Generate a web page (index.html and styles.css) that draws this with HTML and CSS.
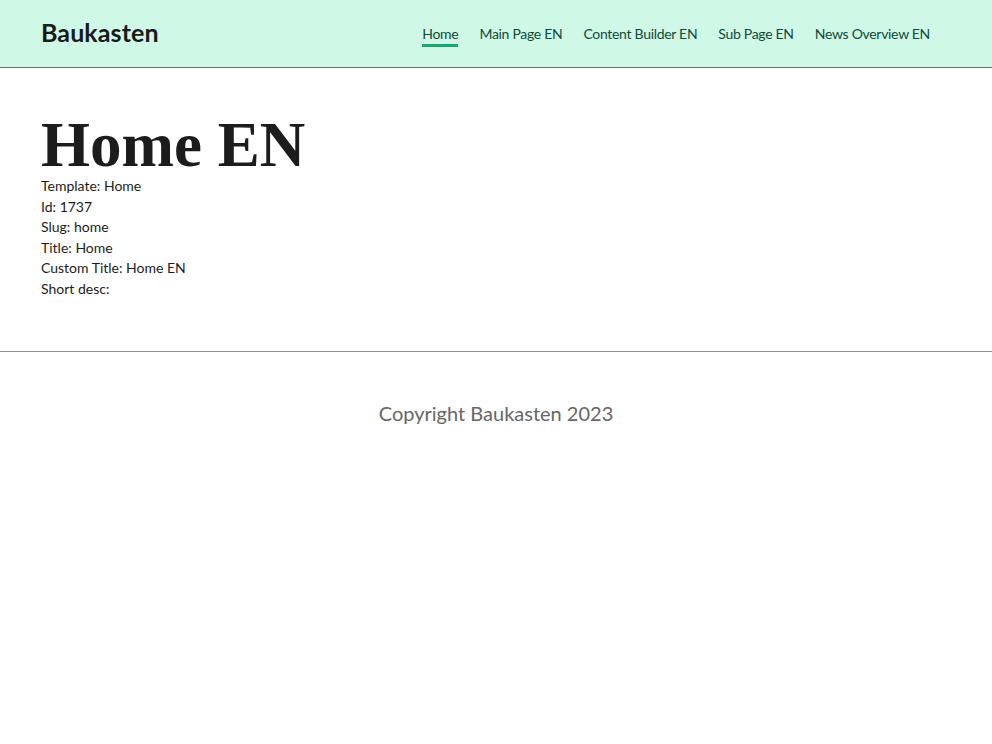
FILE: index.html
```html
<!DOCTYPE html>
<html>

<head>
	<title>Home EN | Baukasten</title>
	<link rel="stylesheet" href="styles.css">
</head>

<body>

	<header class="site_header">
		<div class="wrap header_row">
			<a class="logo" href="#">Baukasten</a>
			<nav class="main_nav">
				<a href="#" class="active">Home</a>
				<a href="#">Main Page EN</a>
				<a href="#">Content Builder EN</a>
				<a href="#">Sub Page EN</a>
				<a href="#">News Overview EN</a>
			</nav>
		</div>
	</header>

	<main class="wrap page_main">
		<h1 class="page_title">Home EN</h1>
		<div class="meta">
			<div>Template: Home</div>
			<div>Id: 1737</div>
			<div>Slug: home</div>
			<div>Title: Home</div>
			<div>Custom Title: Home EN</div>
			<div>Short desc:</div>
		</div>
	</main>

	<footer class="site_footer">
		<p>Copyright Baukasten 2023</p>
	</footer>

</body>

</html>
```

FILE: styles.css
```css
body {
	margin: 0;
	font-family: "Lato", "Open Sans", sans-serif;
	color: #1c1c1c;
	background: #fff;
}

.wrap {
	padding: 0 41px;
}

.site_header {
	background-color: #cff8e6;
	border-bottom: 1px solid #6b6b6b;
	height: 67px;
}

.header_row {
	height: 67px;
	display: flex;
	align-items: center;
	justify-content: space-between;
	padding-right: 62px;
}

.logo {
	font-size: 25px;
	font-weight: 700;
	color: #1a1a1a;
	text-decoration: none;
	letter-spacing: 0.1px;
	margin-bottom: 3px;
}

.main_nav {
	display: flex;
	gap: 21px;
}

.main_nav a {
	font-size: 14px;
	letter-spacing: -0.3px;
	color: #0f4a3a;
	text-decoration: none;
	padding-bottom: 2px;
	border-bottom: 3px solid transparent;
	margin-top: 5px;
}

.main_nav a.active {
	border-bottom-color: #18a870;
}

.page_main {
	padding-top: 46px;
	padding-bottom: 51px;
}

.page_title {
	margin: 0;
	font-family: "Liberation Serif", "DejaVu Serif", serif;
	font-weight: 700;
	font-size: 63px;
	line-height: 62px;
}

.meta {
	font-size: 14px;
	line-height: 20.6px;
}

.site_footer {
	border-top: 1px solid #8f8f8f;
	text-align: center;
}

.site_footer p {
	margin: 49px 0 0;
	font-size: 20px;
	color: #666;
}
```
